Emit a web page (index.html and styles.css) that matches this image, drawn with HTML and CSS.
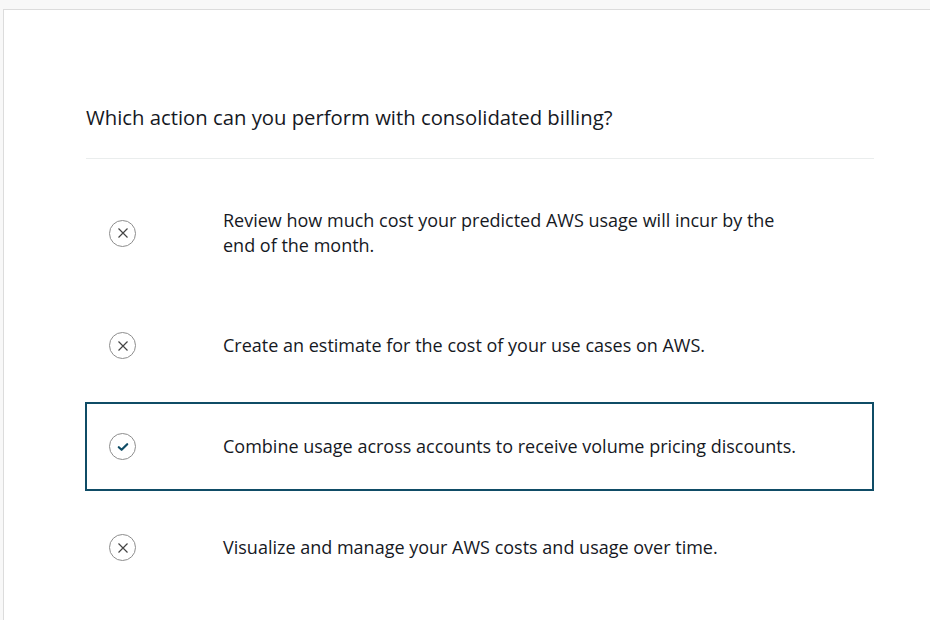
FILE: index.html
```html
<!DOCTYPE html>
<html>
<head>
<meta charset="utf-8">
<link rel="stylesheet" href="styles.css">
</head>
<body>
<div class="card">
  <h1 class="question">Which action can you perform with consolidated billing?</h1>
  <div class="options">
    <div class="option">
      <span class="icon"><svg width="12" height="12" viewBox="0 0 12 12"><path d="M1.5 1.5 L10.5 10.5 M10.5 1.5 L1.5 10.5" stroke="#444" stroke-width="1.2" fill="none"/></svg></span>
      <p class="text">Review how much cost your predicted AWS usage will incur by the<br>end of the month.</p>
    </div>
    <div class="option">
      <span class="icon"><svg width="12" height="12" viewBox="0 0 12 12"><path d="M1.5 1.5 L10.5 10.5 M10.5 1.5 L1.5 10.5" stroke="#444" stroke-width="1.2" fill="none"/></svg></span>
      <p class="text">Create an estimate for the cost of your use cases on AWS.</p>
    </div>
    <div class="option selected">
      <span class="icon"><svg width="12" height="10" viewBox="0 0 12 10"><path d="M1.8 5.2 L4.6 7.8 L10.2 2.2" stroke="#0f4c66" stroke-width="2.2" fill="none" stroke-linecap="round" stroke-linejoin="round"/></svg></span>
      <p class="text">Combine usage across accounts to receive volume pricing discounts.</p>
    </div>
    <div class="option">
      <span class="icon"><svg width="12" height="12" viewBox="0 0 12 12"><path d="M1.5 1.5 L10.5 10.5 M10.5 1.5 L1.5 10.5" stroke="#444" stroke-width="1.2" fill="none"/></svg></span>
      <p class="text">Visualize and manage your AWS costs and usage over time.</p>
    </div>
  </div>
</div>
</body>
</html>
```
FILE: styles.css
```css
html, body {
  margin: 0;
  padding: 0;
  background: #f8f8f8;
}
body {
  padding: 9px 0 0 3px;
  font-family: "Open Sans", "Liberation Sans", sans-serif;
  color: #16191f;
}
.card {
  background: #ffffff;
  border-top: 1px solid #dcdcdc;
  border-left: 1px solid #dcdcdc;
  height: 620px;
  padding: 0 56px 0 82px;
  box-sizing: border-box;
}
.question {
  margin: 0;
  padding: 94px 0 27px 0;
  font-size: 20.3px;
  font-weight: 400;
  line-height: 27px;
  border-bottom: 1px solid #eaeded;
}
.options {
  padding-top: 18px;
  display: flex;
  flex-direction: column;
  gap: 12px;
}
.option {
  display: flex;
  align-items: center;
  border: 2px solid transparent;
  padding: 29px 0;
  margin-left: -1px;
}
.option.first {
  padding: 30px 0;
}
.option.selected {
  border-color: #0f4c66;
}
.icon {
  width: 25px;
  height: 25px;
  border: 1px solid #8d8d8d;
  border-radius: 50%;
  display: flex;
  align-items: center;
  justify-content: center;
  margin-left: 22px;
  flex: none;
}
.text {
  margin: 0 0 0 87px;
  font-size: 18px;
  line-height: 25px;
}
```
